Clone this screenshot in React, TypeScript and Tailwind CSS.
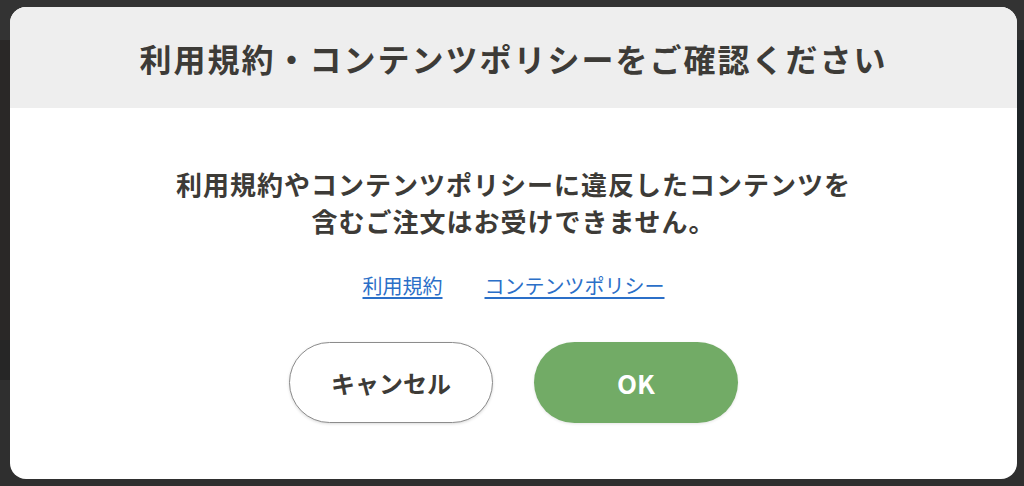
import React from "react";

const font = { fontFamily: '"Noto Sans CJK JP", "Noto Sans", sans-serif' };

const Backdrop = () => (
  <div className="flex h-[486px] w-[1024px] flex-col">
    <div className="h-[40px] bg-[#333333]" />
    <div className="flex h-[300px]">
      <div className="w-[20px] bg-[#2a2827]" />
      <div className="flex-1 bg-[#2b2b2b]" />
      <div className="w-[20px] bg-[#1f2528]" />
    </div>
    <div className="h-[40px] bg-[#262626]" />
    <div className="flex-1 bg-[#2f2f2f]" />
  </div>
);

const ConfirmModal = () => (
  <div className="absolute left-[10px] top-[7px] flex h-[472px] w-[1007px] flex-col overflow-hidden rounded-[16px] bg-white">
    <div className="flex h-[101px] items-center justify-center bg-[#eeeeee]">
      <h2 className="text-[32px] font-bold tracking-[2px] text-[#3d3b37]">
        利用規約・コンテンツポリシーをご確認ください
      </h2>
    </div>
    <div className="flex flex-col items-center pt-[57px]">
      <p className="text-center text-[26px] font-bold leading-[37px] tracking-[1px] text-[#3d3b37]">
        利用規約やコンテンツポリシーに違反したコンテンツを
        <br />
        含むご注文はお受けできません。
      </p>
      <div className="mt-[32px] flex gap-[42px] text-[20px] leading-[30px] text-[#2b6fc8]">
        <a href="#" className="underline underline-offset-[3px]">
          利用規約
        </a>
        <a href="#" className="underline underline-offset-[3px]">
          コンテンツポリシー
        </a>
      </div>
      <div className="mt-[41px] flex gap-[41px]">
        <button className="flex h-[81px] w-[204px] items-center justify-center rounded-full border-[1.5px] border-[#8c8c8c] bg-white text-[24px] font-bold text-[#3d3b37] shadow-[0_1px_3px_rgba(0,0,0,0.15)]">
          キャンセル
        </button>
        <button className="flex h-[81px] w-[204px] items-center justify-center rounded-full bg-[#72ab66] text-[26px] font-bold text-white shadow-[0_1px_3px_rgba(0,0,0,0.1)]">
          OK
        </button>
      </div>
    </div>
  </div>
);

export default function App() {
  return (
    <div className="relative h-[486px] w-[1024px] overflow-hidden" style={font}>
      <Backdrop />
      <ConfirmModal />
    </div>
  );
}
